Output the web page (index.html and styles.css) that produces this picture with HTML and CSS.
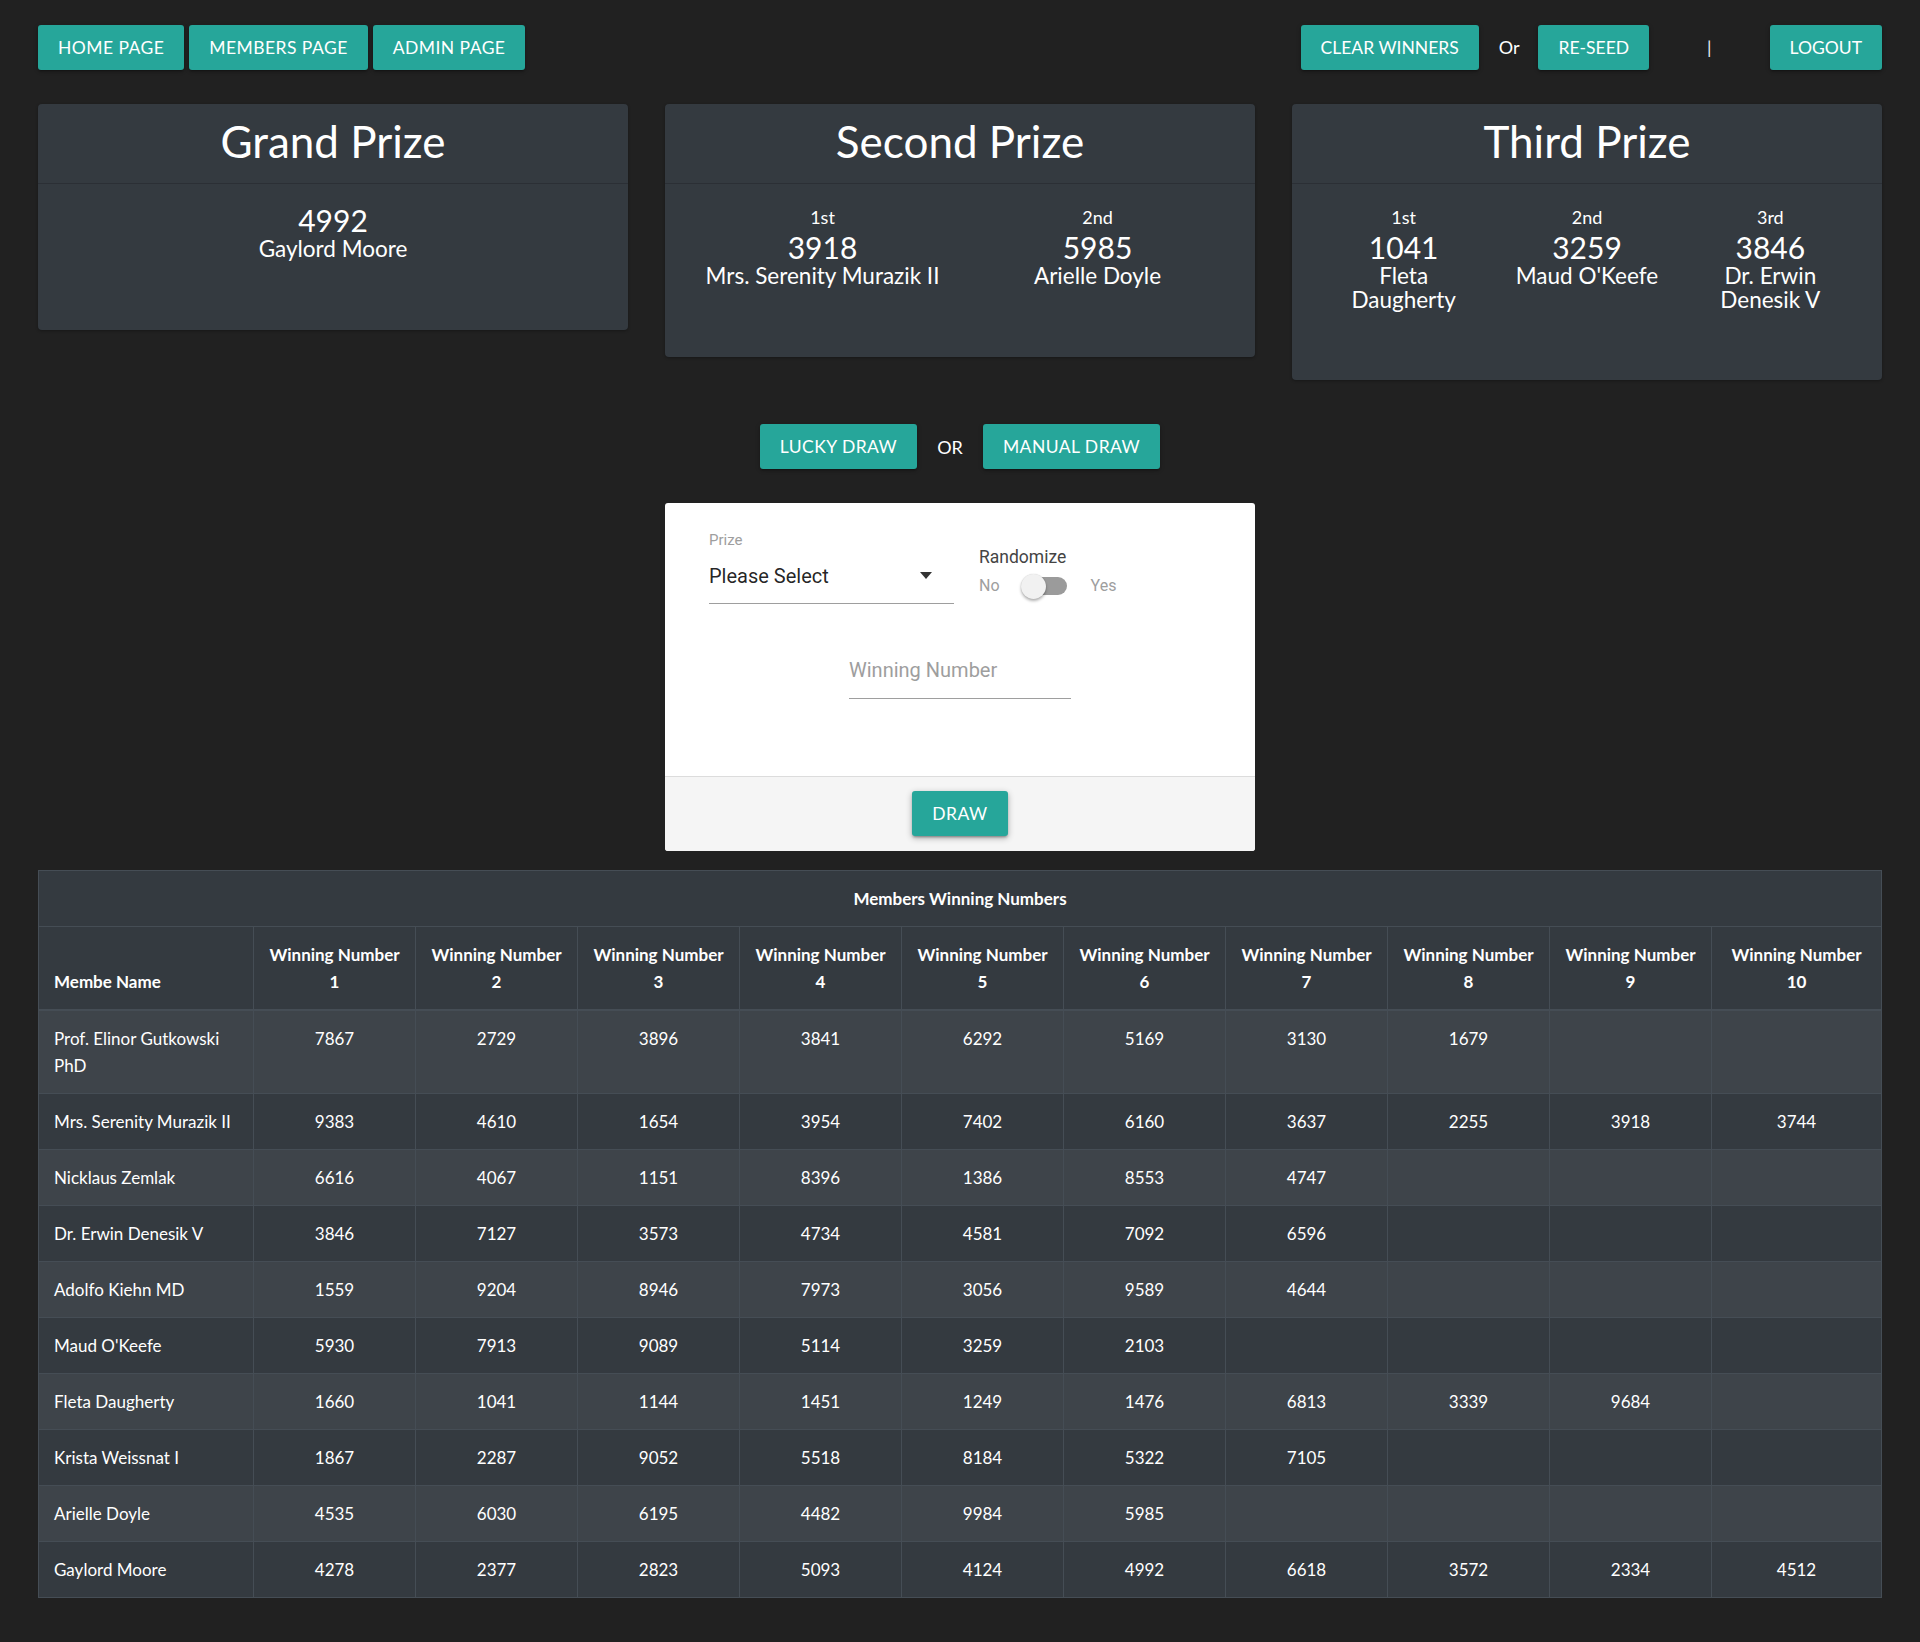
FILE: index.html
```html
<!DOCTYPE html>
<html lang="en">
<head>
<meta charset="utf-8">
<title>Lucky Draw Admin</title>
<link rel="stylesheet" href="styles.css">
</head>
<body>
<header class="topnav">
  <div class="nav-left">
    <a class="btn">Home Page</a>
    <a class="btn">Members Page</a>
    <a class="btn">Admin Page</a>
  </div>
  <div class="nav-right">
    <a class="btn btn-tight">Clear Winners</a>
    <span class="sep-or">Or</span>
    <a class="btn btn-tight">Re-Seed</a>
    <span class="sep-bar">|</span>
    <a class="btn btn-tight">Logout</a>
  </div>
</header>

<section class="prizes">
  <div class="prize-card">
    <div class="prize-head">Grand Prize</div>
    <div class="prize-body">
      <div class="winner">
        <div class="number">4992</div>
        <div class="name">Gaylord Moore</div>
      </div>
    </div>
  </div>
  <div class="prize-card">
    <div class="prize-head">Second Prize</div>
    <div class="prize-body">
      <div class="winner">
        <div class="ordinal">1st</div>
        <div class="number">3918</div>
        <div class="name">Mrs. Serenity Murazik II</div>
      </div>
      <div class="winner">
        <div class="ordinal">2nd</div>
        <div class="number">5985</div>
        <div class="name">Arielle Doyle</div>
      </div>
    </div>
  </div>
  <div class="prize-card">
    <div class="prize-head">Third Prize</div>
    <div class="prize-body">
      <div class="winner">
        <div class="ordinal">1st</div>
        <div class="number">1041</div>
        <div class="name">Fleta Daugherty</div>
      </div>
      <div class="winner">
        <div class="ordinal">2nd</div>
        <div class="number">3259</div>
        <div class="name">Maud O'Keefe</div>
      </div>
      <div class="winner">
        <div class="ordinal">3rd</div>
        <div class="number">3846</div>
        <div class="name">Dr. Erwin Denesik V</div>
      </div>
    </div>
  </div>
</section>

<div class="draw-mode">
  <a class="btn">Lucky Draw</a>
  <span class="sep-or2">OR</span>
  <a class="btn">Manual Draw</a>
</div>

<div class="form-card">
  <div class="form-content">
    <div class="form-row">
      <div class="select-field">
        <div class="field-label">Prize</div>
        <div class="select"><span>Please Select</span><span class="caret"></span></div>
      </div>
      <div class="randomize">
        <div class="rand-label">Randomize</div>
        <div class="switch">
          <span class="sw-text">No</span>
          <span class="lever"><span class="thumb"></span></span>
          <span class="sw-text">Yes</span>
        </div>
      </div>
    </div>
    <div class="number-field">Winning Number</div>
  </div>
  <div class="form-footer">
    <a class="btn btn-raised">Draw</a>
  </div>
</div>

<table class="winners">
  <colgroup>
    <col class="c-name">
    <col class="c-num"><col class="c-num"><col class="c-num"><col class="c-num"><col class="c-num">
    <col class="c-num"><col class="c-num"><col class="c-num"><col class="c-num"><col>
  </colgroup>
  <thead>
    <tr><th colspan="11" class="caption">Members Winning Numbers</th></tr>
    <tr class="heads">
      <th class="left">Membe Name</th>
      <th>Winning Number<br>1</th>
      <th>Winning Number<br>2</th>
      <th>Winning Number<br>3</th>
      <th>Winning Number<br>4</th>
      <th>Winning Number<br>5</th>
      <th>Winning Number<br>6</th>
      <th>Winning Number<br>7</th>
      <th>Winning Number<br>8</th>
      <th>Winning Number<br>9</th>
      <th>Winning Number<br>10</th>
    </tr>
  </thead>
  <tbody>
    <tr><td class="left">Prof. Elinor Gutkowski PhD</td><td>7867</td><td>2729</td><td>3896</td><td>3841</td><td>6292</td><td>5169</td><td>3130</td><td>1679</td><td></td><td></td></tr>
    <tr><td class="left">Mrs. Serenity Murazik II</td><td>9383</td><td>4610</td><td>1654</td><td>3954</td><td>7402</td><td>6160</td><td>3637</td><td>2255</td><td>3918</td><td>3744</td></tr>
    <tr><td class="left">Nicklaus Zemlak</td><td>6616</td><td>4067</td><td>1151</td><td>8396</td><td>1386</td><td>8553</td><td>4747</td><td></td><td></td><td></td></tr>
    <tr><td class="left">Dr. Erwin Denesik V</td><td>3846</td><td>7127</td><td>3573</td><td>4734</td><td>4581</td><td>7092</td><td>6596</td><td></td><td></td><td></td></tr>
    <tr><td class="left">Adolfo Kiehn MD</td><td>1559</td><td>9204</td><td>8946</td><td>7973</td><td>3056</td><td>9589</td><td>4644</td><td></td><td></td><td></td></tr>
    <tr><td class="left">Maud O'Keefe</td><td>5930</td><td>7913</td><td>9089</td><td>5114</td><td>3259</td><td>2103</td><td></td><td></td><td></td><td></td></tr>
    <tr><td class="left">Fleta Daugherty</td><td>1660</td><td>1041</td><td>1144</td><td>1451</td><td>1249</td><td>1476</td><td>6813</td><td>3339</td><td>9684</td><td></td></tr>
    <tr><td class="left">Krista Weissnat I</td><td>1867</td><td>2287</td><td>9052</td><td>5518</td><td>8184</td><td>5322</td><td>7105</td><td></td><td></td><td></td></tr>
    <tr><td class="left">Arielle Doyle</td><td>4535</td><td>6030</td><td>6195</td><td>4482</td><td>9984</td><td>5985</td><td></td><td></td><td></td><td></td></tr>
    <tr><td class="left">Gaylord Moore</td><td>4278</td><td>2377</td><td>2823</td><td>5093</td><td>4124</td><td>4992</td><td>6618</td><td>3572</td><td>2334</td><td>4512</td></tr>
  </tbody>
</table>
</body>
</html>
```
FILE: styles.css
```css
* { box-sizing: border-box; }

body {
  margin: 0;
  padding: 24px 38px 43px;
  background: #212121;
  color: #fff;
  font-family: Lato, "Open Sans", sans-serif;
}

.btn {
  display: inline-flex;
  align-items: center;
  justify-content: center;
  height: 45px;
  padding: 0 20px;
  background: #26a69a;
  color: #fff;
  font-family: Lato, sans-serif;
  font-size: 17.5px;
  letter-spacing: 0.45px;
  text-transform: uppercase;
  border-radius: 3px;
  box-shadow: 0 2px 2px 0 rgba(0,0,0,.14), 0 3px 1px -2px rgba(0,0,0,.12), 0 1px 5px 0 rgba(0,0,0,.2);
  cursor: pointer;
}
.btn-tight { letter-spacing: 0; }

/* top navigation */
.topnav {
  display: flex;
  justify-content: space-between;
  align-items: center;
  height: 46px;
}
.nav-left { display: flex; gap: 5px; }
.nav-right { display: flex; align-items: center; }
.sep-or { margin: 0 19px 0 20px; font-size: 18px; }
.sep-bar { margin: 0 58px; font-size: 18px; color: #e8eef5; }

/* prize cards */
.prizes {
  display: grid;
  grid-template-columns: repeat(3, 1fr);
  gap: 37px;
  margin-top: 34px;
  align-items: start;
}
.prize-card {
  background: #343a40;
  border-radius: 4px;
  box-shadow: 0 1px 3px rgba(0,0,0,.3);
}
.prize-head {
  height: 80px;
  padding-bottom: 6px;
  border-bottom: 1px solid #2b2f35;
  display: flex;
  align-items: center;
  justify-content: center;
  font-size: 44px;
}
.prize-body {
  display: flex;
  padding: 21px 20px 69px;
}
.prize-card:first-child .prize-body { padding-top: 19.5px; padding-bottom: 69px; }
.winner {
  flex: 1;
  padding: 0 15px;
  text-align: center;
}
.ordinal { font-size: 18px; line-height: 25.5px; }
.number { font-size: 30px; line-height: 32px; }
.name { font-size: 22.5px; line-height: 23.5px; margin-top: 1.5px; }

/* draw mode */
.draw-mode {
  display: flex;
  justify-content: center;
  align-items: center;
  margin-top: 44px;
}
.sep-or2 { margin: 0 20px; font-size: 18px; }

/* form card */
.form-card {
  width: 590px;
  margin: 34px auto 0;
  background: #fff;
  border-radius: 3px;
  color: rgba(0,0,0,.87);
  font-family: Roboto, sans-serif;
}
.form-content { padding: 28px 44px 77px; }
.form-row { display: flex; align-items: flex-start; }
.select-field { width: 245px; }
.field-label { font-size: 15px; line-height: 18px; color: #9e9e9e; }
.select {
  margin-top: 12px;
  height: 43px;
  line-height: 30px;
  font-size: 20px;
  padding-bottom: 12px;
  border-bottom: 1px solid #9e9e9e;
  display: flex;
  justify-content: space-between;
}
.caret {
  margin: 11px 22px 0 0;
  width: 0;
  height: 0;
  border-left: 6px solid transparent;
  border-right: 6px solid transparent;
  border-top: 7px solid #333;
}
.randomize { margin-left: 25px; padding-top: 15.5px; }
.rand-label { font-size: 17.5px; line-height: 21px; color: #444; }
.switch { margin-top: 5.5px; display: flex; align-items: center; height: 25px; }
.sw-text { font-size: 16px; color: #9e9e9e; }
.lever {
  position: relative;
  width: 45px;
  height: 17.5px;
  border-radius: 9px;
  background: #9b9b9b;
  margin: 1px 24px 0 22px;
}
.thumb {
  position: absolute;
  left: -1px;
  top: -3.75px;
  width: 25px;
  height: 25px;
  border-radius: 50%;
  background: #f1f1f1;
  box-shadow: 0 2px 3px rgba(0,0,0,.3), 0 0 1px rgba(0,0,0,.2);
}
.number-field {
  width: 222px;
  margin: 51px auto 0;
  font-size: 20px;
  line-height: 30px;
  padding-bottom: 13px;
  color: #9e9e9e;
  border-bottom: 1px solid #9e9e9e;
}
.form-footer {
  border-top: 1px solid #dcdcdc;
  background: #f5f5f5;
  padding: 14px 0 15px;
  display: flex;
  justify-content: center;
  border-radius: 0 0 3px 3px;
}
.btn-raised {
  box-shadow: 0 2px 2px 0 rgba(0,0,0,.14), 0 3px 1px -2px rgba(0,0,0,.12), 0 2px 6px 0 rgba(0,0,0,.3);
}

/* table */
.winners {
  width: 100%;
  margin-top: 19px;
  border-collapse: collapse;
  table-layout: fixed;
  background: #343a40;
  border: 1px solid #454d55;
  font-size: 17px;
  line-height: 27px;
}
.c-name { width: 215px; }
.c-num { width: 162px; }
.winners th, .winners td {
  border: 1px solid #454d55;
  padding: 14px 15px;
  text-align: center;
  vertical-align: top;
}
.winners th { font-weight: 700; }
.winners .caption { text-align: center; }
.winners .heads th { vertical-align: bottom; border-bottom: 2px solid #454d55; }
.winners .left { text-align: left; }
.winners tbody tr:nth-child(odd) { background: #3e444a; }
```
